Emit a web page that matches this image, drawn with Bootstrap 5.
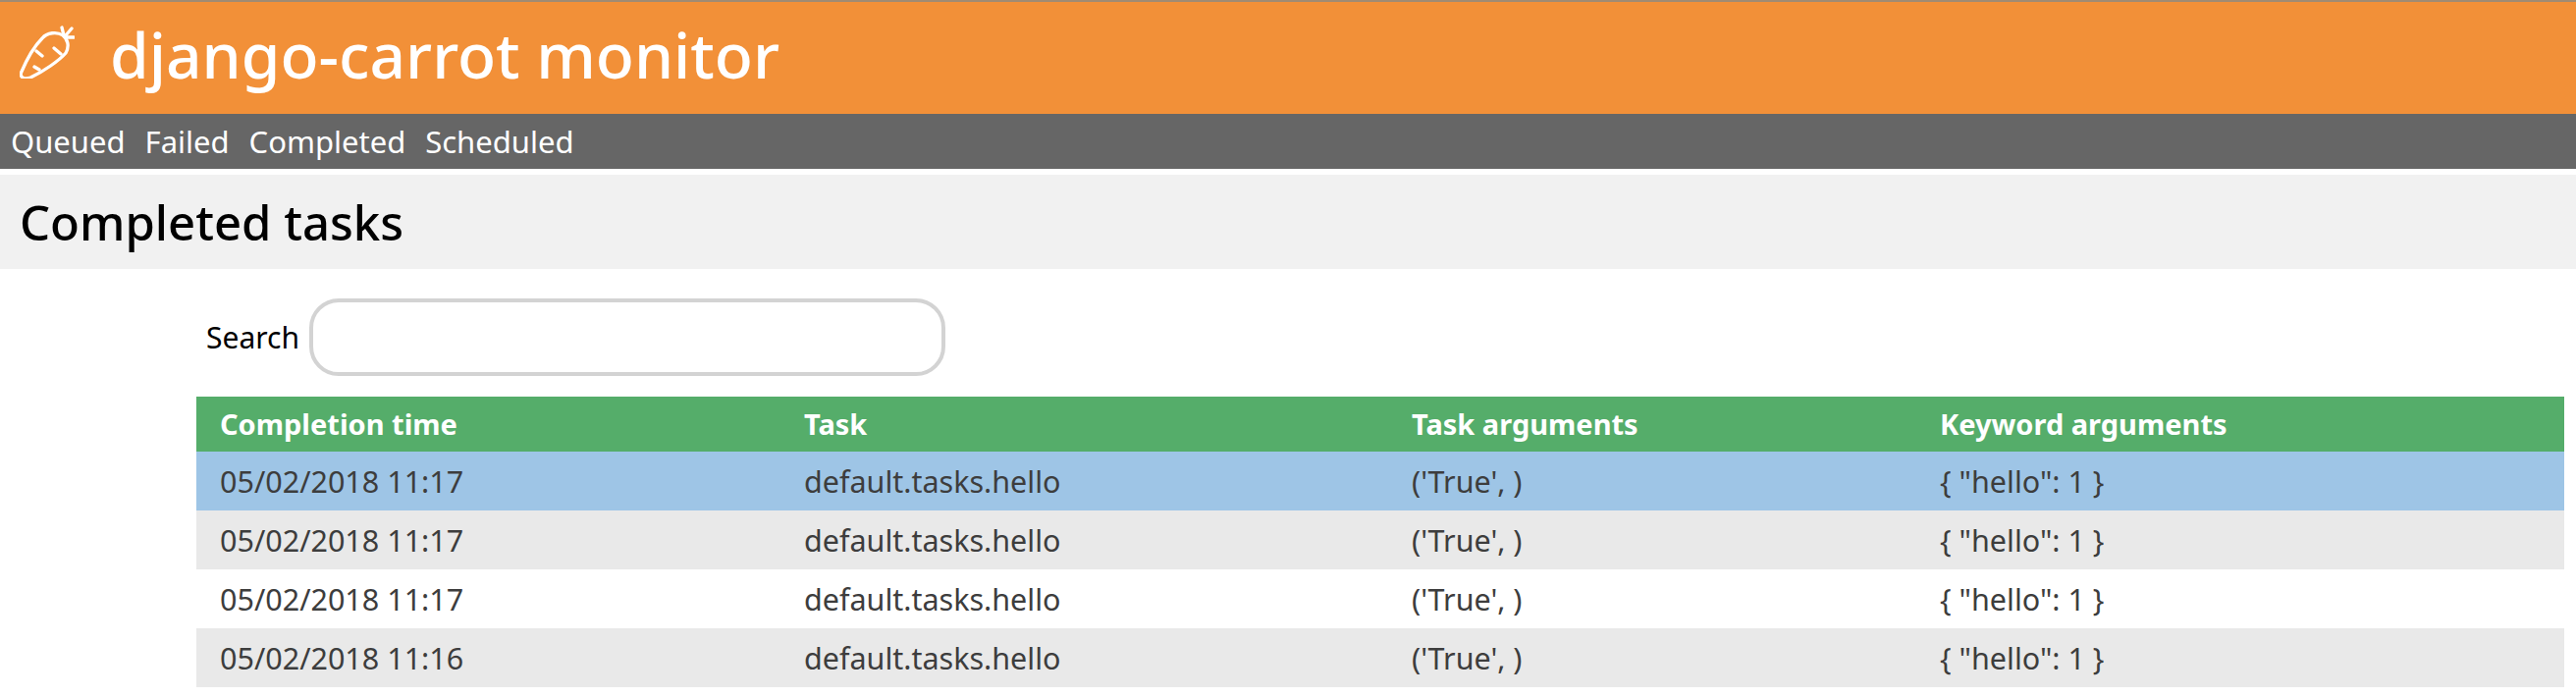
<!DOCTYPE html>
<html lang="en">
<head>
    <meta charset="UTF-8">
    <meta name="viewport" content="width=device-width, initial-scale=1.0">
    <title>django-carrot monitor</title>
    <link rel="stylesheet" href="https://cdn.jsdelivr.net/npm/bootstrap@5.3.3/dist/css/bootstrap.min.css">
    <script src="https://cdn.jsdelivr.net/npm/bootstrap@5.3.3/dist/js/bootstrap.bundle.min.js"></script>
    <style>
        body {
            font-family: "Noto Sans", "Open Sans", sans-serif;
            color: #000;
        }
        .top-bar {
            height: 116px;
            background: #f29038;
            border-top: 2px solid #a08b73;
            color: #fff;
            padding-left: 20px;
        }
        .top-bar svg {
            width: 56px;
            height: 54px;
            margin-top: -12px;
        }
        .app-name {
            font-size: 64px;
            line-height: 1;
            margin: -6px 0 0 36px;
            font-weight: 500;
        }
        .menu-bar {
            height: 56px;
            background: #666;
            padding-left: 11px;
            gap: 20px;
        }
        .menu-bar a {
            color: #fff;
            text-decoration: none;
            font-size: 31px;
        }
        .page-head {
            height: 96px;
            margin-top: 6px;
            background: #f1f1f1;
            padding-left: 20px;
        }
        .page-head h1 {
            font-size: 49px;
            margin: 0;
            font-weight: 500;
        }
        .page-body {
            padding: 30px 12px 0 200px;
        }
        .search-box {
            height: 79px;
            padding-left: 10px;
            gap: 10px;
            margin-bottom: 21px;
        }
        .search-box label {
            font-size: 30px;
        }
        .search-box input {
            width: 648px;
            height: 79px;
            border: 4px solid #d3d3d3;
            border-radius: 30px;
            outline: none;
        }
        .task-table {
            width: 100%;
            table-layout: fixed;
            font-size: 30.5px;
            color: #3d3d3d;
        }
        .task-table th {
            height: 56px;
            padding: 0 24px;
            background: #55ad6a;
            color: #fff;
            font-size: 29px;
            font-weight: 700;
        }
        .task-table td {
            height: 60px;
            padding: 2px 24px 0;
        }
        .task-table tbody tr:nth-child(even) td {
            background: #e9e9e9;
        }
        .task-table tbody tr.picked td {
            background: #9ec5e6;
        }
    </style>
</head>
<body>
    <header>
        <div class="top-bar d-flex align-items-center">
            <svg viewBox="20 26 56 54" fill="none" stroke="#fff" stroke-width="3.3" stroke-linecap="round" stroke-linejoin="round">
                <path d="M21.5 74C27 61 35 47 43 39C48 33 58 32 64 36C69 40 71 47 67 54C60 62 44 73 31 79C25 81 20 79 21.5 74Z"/>
                <path d="M37 52L43 57M55 49L62 55M35 68L40 71M63 28L65 36M73 29L67 36M75 38L68 38"/>
            </svg>
            <div class="app-name">django-carrot monitor</div>
        </div>
        <nav class="menu-bar d-flex align-items-center">
            <a href="#">Queued</a>
            <a href="#">Failed</a>
            <a href="#">Completed</a>
            <a href="#">Scheduled</a>
        </nav>
    </header>
    <div class="page-head d-flex align-items-center">
        <h1>Completed tasks</h1>
    </div>
    <section class="page-body">
        <form class="search-box d-flex align-items-center">
            <label for="search">Search</label>
            <input type="text" id="search">
        </form>
        <table class="task-table">
            <colgroup>
                <col style="width: 595px">
                <col style="width: 619px">
                <col style="width: 538px">
                <col>
            </colgroup>
            <thead>
                <tr>
                    <th>Completion time</th>
                    <th>Task</th>
                    <th>Task arguments</th>
                    <th>Keyword arguments</th>
                </tr>
            </thead>
            <tbody>
                <tr class="picked">
                    <td>05/02/2018 11:17</td>
                    <td>default.tasks.hello</td>
                    <td>('True', )</td>
                    <td>{ "hello": 1 }</td>
                </tr>
                <tr>
                    <td>05/02/2018 11:17</td>
                    <td>default.tasks.hello</td>
                    <td>('True', )</td>
                    <td>{ "hello": 1 }</td>
                </tr>
                <tr>
                    <td>05/02/2018 11:17</td>
                    <td>default.tasks.hello</td>
                    <td>('True', )</td>
                    <td>{ "hello": 1 }</td>
                </tr>
                <tr>
                    <td>05/02/2018 11:16</td>
                    <td>default.tasks.hello</td>
                    <td>('True', )</td>
                    <td>{ "hello": 1 }</td>
                </tr>
            </tbody>
        </table>
    </section>
</body>
</html>
